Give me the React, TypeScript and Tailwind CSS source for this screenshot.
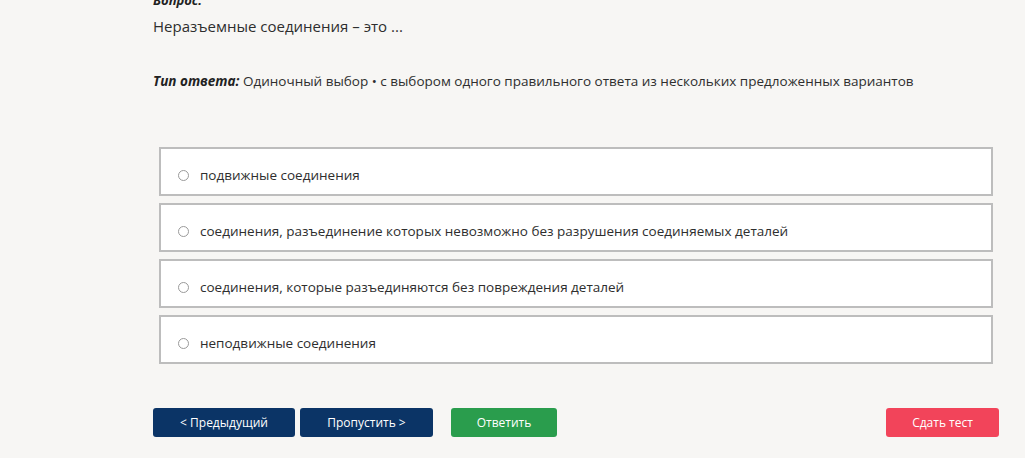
import { useState } from "react";

const options = [
  "подвижные соединения",
  "соединения, разъединение которых невозможно без разрушения соединяемых деталей",
  "соединения, которые разъединяются без повреждения деталей",
  "неподвижные соединения",
];

const App = () => {
  const [selected, setSelected] = useState<number | null>(null);

  return (
    <div
      className="min-h-screen w-full bg-[#f7f6f4] text-[#333] overflow-hidden"
      style={{ fontFamily: '"Open Sans", "Noto Sans", sans-serif' }}
    >
      <div className="pl-[153px] pr-[26px]">
        {/* Question */}
        <p className="mt-[-9px] text-[13px] font-bold italic leading-[18px] text-[#222]">Вопрос:</p>
        <p className="mt-[7px] text-[15px] leading-[20px] text-[#2e2e2e]">Неразъемные соединения – это ...</p>

        {/* Answer type */}
        <p className="mt-[36px] text-[13.5px] leading-[18px] text-[#2e2e2e]">
          <span className="font-bold italic text-[#222]">Тип ответа:</span> Одиночный выбор • с выбором одного
          правильного ответа из нескольких предложенных вариантов
        </p>

        {/* Options */}
        <div className="mt-[57px] ml-[6px] w-[834px] flex flex-col gap-[7px]">
          {options.map((text, i) => (
            <label
              key={i}
              className="h-[49px] flex items-center gap-[11px] pl-[17px] pt-[7px] bg-white border-2 border-[#bdbdbd] cursor-pointer"
              onClick={() => setSelected(i)}
            >
              <span
                className={
                  selected === i
                    ? "w-[11px] h-[11px] rounded-full border-[3px] border-[#0b3466]"
                    : "w-[11px] h-[11px] rounded-full border border-[#9a9a9a]"
                }
              />
              <span className="text-[13.5px] text-[#2e2e2e]">{text}</span>
            </label>
          ))}
        </div>

        {/* Buttons */}
        <div className="mt-[44px] flex items-center">
          <button className="w-[142px] h-[29px] rounded-[3px] bg-[#0b3466] text-white text-[12px]">
            &lt; Предыдущий
          </button>
          <button className="ml-[5px] w-[133px] h-[29px] rounded-[3px] bg-[#0b3466] text-white text-[12px]">
            Пропустить &gt;
          </button>
          <button className="ml-[18px] w-[106px] h-[29px] rounded-[3px] bg-[#2a9d4d] text-white text-[12px]">
            Ответить
          </button>
          <button className="ml-auto w-[113px] h-[29px] rounded-[3px] bg-[#f2445a] text-white text-[12px]">
            Сдать тест
          </button>
        </div>
      </div>
    </div>
  );
};

export default App;
